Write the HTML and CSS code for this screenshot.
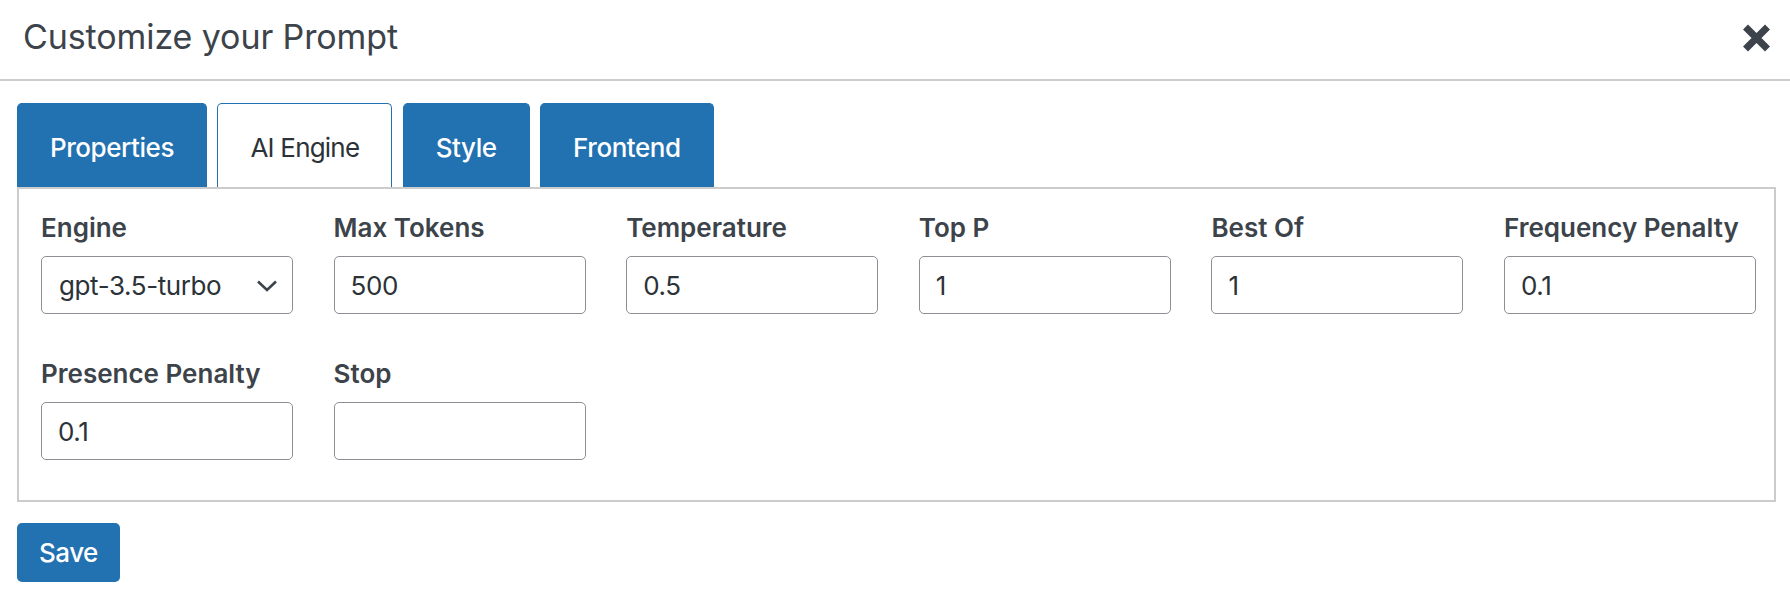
FILE: index.html
```html
<!DOCTYPE html>
<html lang="en">
<head>
<meta charset="utf-8">
<title>Customize your Prompt</title>
<link rel="stylesheet" href="styles.css">
</head>
<body>
<header class="modal-header">
  <h1 class="modal-title">Customize your Prompt</h1>
  <button class="close-btn" aria-label="Close">
    <svg width="31" height="30" viewBox="0 0 31 30"><path d="M4.5 4 L26.5 26 M26.5 4 L4.5 26" stroke="#3c434a" stroke-width="7" fill="none"/></svg>
  </button>
</header>
<main class="modal-body">
  <nav class="tabs">
    <button class="tab">Properties</button>
    <button class="tab active">AI Engine</button>
    <button class="tab">Style</button>
    <button class="tab">Frontend</button>
  </nav>
  <section class="panel">
    <div class="fields">
      <div class="field">
        <label class="field-label">Engine</label>
        <div class="select-wrap">
          <select class="control select"><option>gpt-3.5-turbo</option></select>
          <svg class="chevron" width="22" height="12" viewBox="0 0 22 12"><path d="M2 1.5 L11 10 L20 1.5" stroke="#3c434a" stroke-width="2.6" fill="none" stroke-linejoin="miter"/></svg>
        </div>
      </div>
      <div class="field">
        <label class="field-label">Max Tokens</label>
        <input class="control" type="text" value="500">
      </div>
      <div class="field">
        <label class="field-label">Temperature</label>
        <input class="control" type="text" value="0.5">
      </div>
      <div class="field">
        <label class="field-label">Top P</label>
        <input class="control" type="text" value="1">
      </div>
      <div class="field">
        <label class="field-label">Best Of</label>
        <input class="control" type="text" value="1">
      </div>
      <div class="field">
        <label class="field-label">Frequency Penalty</label>
        <input class="control" type="text" value="0.1">
      </div>
      <div class="field">
        <label class="field-label">Presence Penalty</label>
        <input class="control" type="text" value="0.1">
      </div>
      <div class="field">
        <label class="field-label">Stop</label>
        <input class="control" type="text" value="">
      </div>
    </div>
  </section>
  <button class="save-btn">Save</button>
</main>
</body>
</html>
```

FILE: styles.css
```css
* { box-sizing: border-box; }

html, body {
  margin: 0;
  padding: 0;
  background: #ffffff;
  font-family: Inter, "Noto Sans", "Liberation Sans", sans-serif;
  color: #3c434a;
}

.modal-header {
  height: 81px;
  display: flex;
  align-items: center;
  justify-content: space-between;
  padding: 0 18px 6px 23px;
  border-bottom: 2px solid #cccccc;
}

.modal-title {
  margin: 0;
  font-size: 34px;
  font-weight: 400;
  line-height: 41px;
  letter-spacing: -0.1px;
  color: #3c434a;
}

.close-btn {
  border: 0;
  background: none;
  padding: 0;
  margin-top: 3px;
  width: 31px;
  height: 30px;
  display: flex;
}

.modal-body {
  padding: 22px 14px 0 17px;
}

.tabs {
  display: flex;
  gap: 10.5px;
}

.tab {
  height: 84px;
  padding: 28px 32px 0;
  border: 1px solid #2271b1;
  border-bottom: 0;
  border-radius: 5px 5px 0 0;
  background: #2271b1;
  color: #ffffff;
  font-family: inherit;
  font-size: 26px;
  font-weight: 500;
  line-height: 31px;
  letter-spacing: -0.45px;
  display: flex;
  align-items: flex-start;
}

.tab.active {
  background: #ffffff;
  color: #2c3338;
  font-weight: 400;
  letter-spacing: -0.8px;
}

.panel {
  border: 2px solid #cccccc;
  padding: 23px 18px 40px 22px;
}

.fields {
  display: grid;
  grid-template-columns: repeat(6, 1fr);
  column-gap: 40.6px;
  row-gap: 44px;
}

.field {
  display: flex;
  flex-direction: column;
}

.field-label {
  font-size: 26px;
  font-weight: 600;
  line-height: 31px;
  color: #3c434a;
  margin-bottom: 13px;
  white-space: nowrap;
}

.control {
  width: 100%;
  height: 58px;
  border: 1px solid #8c8f94;
  border-radius: 5px;
  padding: 0 16px;
  font-family: inherit;
  font-size: 26px;
  letter-spacing: -0.4px;
  color: #2c3338;
  background: #ffffff;
  outline: none;
}

.select-wrap {
  position: relative;
}

.select {
  appearance: none;
  -webkit-appearance: none;
  padding-left: 17px;
}

.chevron {
  position: absolute;
  right: 15px;
  top: 24px;
  pointer-events: none;
}

.save-btn {
  margin-top: 21px;
  height: 59px;
  padding: 0 22px;
  border: 0;
  border-radius: 5px;
  background: #2271b1;
  color: #ffffff;
  font-family: inherit;
  font-size: 26px;
  font-weight: 500;
  line-height: 31px;
  letter-spacing: -0.5px;
}
```
